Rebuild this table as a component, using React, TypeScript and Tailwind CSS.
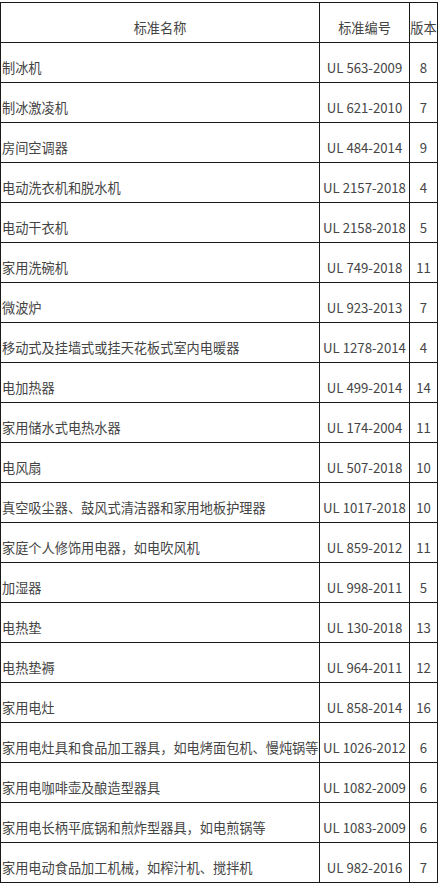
const standards = [
  { name: "制冰机", code: "UL 563-2009", version: "8" },
  { name: "制冰激凌机", code: "UL 621-2010", version: "7" },
  { name: "房间空调器", code: "UL 484-2014", version: "9" },
  { name: "电动洗衣机和脱水机", code: "UL 2157-2018", version: "4" },
  { name: "电动干衣机", code: "UL 2158-2018", version: "5" },
  { name: "家用洗碗机", code: "UL 749-2018", version: "11" },
  { name: "微波炉", code: "UL 923-2013", version: "7" },
  { name: "移动式及挂墙式或挂天花板式室内电暖器", code: "UL 1278-2014", version: "4" },
  { name: "电加热器", code: "UL 499-2014", version: "14" },
  { name: "家用储水式电热水器", code: "UL 174-2004", version: "11" },
  { name: "电风扇", code: "UL 507-2018", version: "10" },
  { name: "真空吸尘器、鼓风式清洁器和家用地板护理器", code: "UL 1017-2018", version: "10" },
  { name: "家庭个人修饰用电器，如电吹风机", code: "UL 859-2012", version: "11" },
  { name: "加湿器", code: "UL 998-2011", version: "5" },
  { name: "电热垫", code: "UL 130-2018", version: "13" },
  { name: "电热垫褥", code: "UL 964-2011", version: "12" },
  { name: "家用电灶", code: "UL 858-2014", version: "16" },
  { name: "家用电灶具和食品加工器具，如电烤面包机、慢炖锅等", code: "UL 1026-2012", version: "6" },
  { name: "家用电咖啡壶及酿造型器具", code: "UL 1082-2009", version: "6" },
  { name: "家用电长柄平底锅和煎炸型器具，如电煎锅等", code: "UL 1083-2009", version: "6" },
  { name: "家用电动食品加工机械，如榨汁机、搅拌机", code: "UL 982-2016", version: "7" },
];

export default function App() {
  const cell = "h-[40px] border border-[#1a1a1a] align-bottom pb-[4px] leading-[20px] whitespace-nowrap overflow-visible";

  return (
    <div
      className="min-h-[885px] bg-white pt-[2px] text-[13.2px] text-[#444]"
      style={{ fontFamily: '"Segoe UI", "Noto Sans CJK SC", "Noto Sans", sans-serif' }}
    >
      <table className="table-fixed border-collapse w-[437px]">
        <colgroup>
          <col className="w-[319px]" />
          <col className="w-[90px]" />
          <col className="w-[28px]" />
        </colgroup>
        <thead>
          <tr>
            <th className={`${cell} font-normal text-center`}>标准名称</th>
            <th className={`${cell} font-normal text-center`}>标准编号</th>
            <th className={`${cell} font-normal text-center px-0`}>版本</th>
          </tr>
        </thead>
        <tbody>
          {standards.map((item, index) => (
            <tr key={index}>
              <td className={`${cell} text-left pl-[1px]`}>{item.name}</td>
              <td className={`${cell} text-center`}>{item.code}</td>
              <td className={`${cell} text-center`}>{item.version}</td>
            </tr>
          ))}
        </tbody>
      </table>
    </div>
  );
}
